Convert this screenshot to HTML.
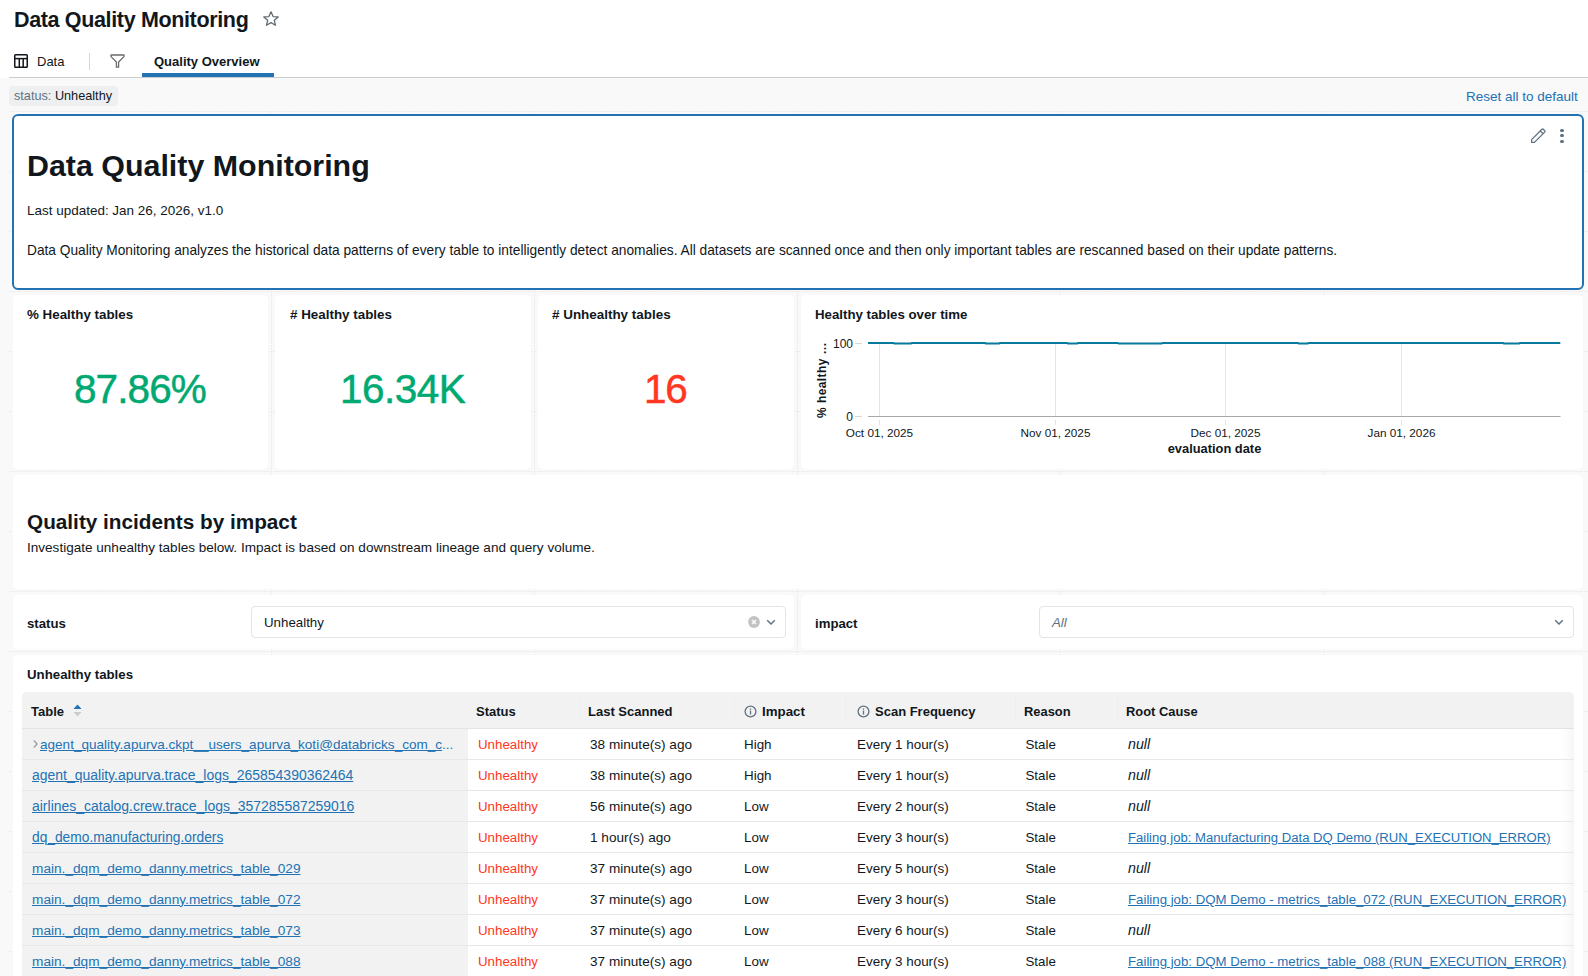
<!DOCTYPE html>
<html><head><meta charset="utf-8"><title>Data Quality Monitoring</title>
<style>
html,body{margin:0;padding:0;width:1588px;height:976px;overflow:hidden;background:#f9f9f9;}
body{position:relative;font-family:"Liberation Sans", sans-serif;}
.r{position:absolute;}
.t{position:absolute;white-space:nowrap;}
</style></head><body>
<div class="r" style="left:0px;top:0px;width:1588px;height:78px;background:#fff;"></div>
<div class="r" style="left:0px;top:78px;width:1588px;height:898px;background:#f9f9f9;"></div>
<div class="r" style="left:9px;top:77px;width:1579px;height:1px;background:#cdcdcd;"></div>
<svg class="r" style="left:0;top:0" width="1588" height="976"><line x1="9" y1="111.5" x2="1588" y2="111.5" stroke="#ececec" stroke-width="1" stroke-dasharray="2 1"/><line x1="9" y1="171.5" x2="1588" y2="171.5" stroke="#ececec" stroke-width="1" stroke-dasharray="2 1"/><line x1="9" y1="231.5" x2="1588" y2="231.5" stroke="#ececec" stroke-width="1" stroke-dasharray="2 1"/><line x1="9" y1="291.5" x2="1588" y2="291.5" stroke="#ececec" stroke-width="1" stroke-dasharray="2 1"/><line x1="9" y1="351.5" x2="1588" y2="351.5" stroke="#ececec" stroke-width="1" stroke-dasharray="2 1"/><line x1="9" y1="411.5" x2="1588" y2="411.5" stroke="#ececec" stroke-width="1" stroke-dasharray="2 1"/><line x1="9" y1="471.5" x2="1588" y2="471.5" stroke="#ececec" stroke-width="1" stroke-dasharray="2 1"/><line x1="9" y1="531.5" x2="1588" y2="531.5" stroke="#ececec" stroke-width="1" stroke-dasharray="2 1"/><line x1="9" y1="591.5" x2="1588" y2="591.5" stroke="#ececec" stroke-width="1" stroke-dasharray="2 1"/><line x1="9" y1="651.5" x2="1588" y2="651.5" stroke="#ececec" stroke-width="1" stroke-dasharray="2 1"/><line x1="9" y1="711.5" x2="1588" y2="711.5" stroke="#ececec" stroke-width="1" stroke-dasharray="2 1"/><line x1="9" y1="771.5" x2="1588" y2="771.5" stroke="#ececec" stroke-width="1" stroke-dasharray="2 1"/><line x1="9" y1="831.5" x2="1588" y2="831.5" stroke="#ececec" stroke-width="1" stroke-dasharray="2 1"/><line x1="9" y1="891.5" x2="1588" y2="891.5" stroke="#ececec" stroke-width="1" stroke-dasharray="2 1"/><line x1="9" y1="951.5" x2="1588" y2="951.5" stroke="#ececec" stroke-width="1" stroke-dasharray="2 1"/><line x1="271.5" y1="111" x2="271.5" y2="976" stroke="#ececec" stroke-width="1" stroke-dasharray="2 1"/><line x1="534.5" y1="111" x2="534.5" y2="976" stroke="#ececec" stroke-width="1" stroke-dasharray="2 1"/><line x1="797.5" y1="111" x2="797.5" y2="976" stroke="#ececec" stroke-width="1" stroke-dasharray="2 1"/><line x1="1060.5" y1="111" x2="1060.5" y2="976" stroke="#ececec" stroke-width="1" stroke-dasharray="2 1"/><line x1="1323.5" y1="111" x2="1323.5" y2="976" stroke="#ececec" stroke-width="1" stroke-dasharray="2 1"/></svg>
<div class="t " style="left:14.00px;top:10.25px;font-size:21.5px;line-height:21.5px;font-weight:700;color:#11171c;letter-spacing:-0.35px;font-style:normal;">Data Quality Monitoring</div>
<svg class="r" style="left:262px;top:10px" width="18" height="17" viewBox="0 0 18 17"><path d="M9 1.8 L11.1 6.6 L16.2 6.9 L12.3 10.3 L13.5 15.2 L9 12.6 L4.5 15.2 L5.7 10.3 L1.8 6.9 L6.9 6.6 Z" fill="none" stroke="#5f6b75" stroke-width="1.3" stroke-linejoin="round"/></svg>
<svg class="r" style="left:14px;top:54px" width="14" height="14" viewBox="0 0 14 14"><rect x="0.75" y="0.75" width="12.5" height="12.5" rx="0.8" fill="none" stroke="#11171c" stroke-width="1.5"/><line x1="0.75" y1="4.6" x2="13.25" y2="4.6" stroke="#11171c" stroke-width="1.5"/><line x1="5.3" y1="4.6" x2="5.3" y2="13" stroke="#11171c" stroke-width="1.5"/><line x1="9.2" y1="4.6" x2="9.2" y2="13" stroke="#11171c" stroke-width="1.5"/></svg>
<div class="t " style="left:37.00px;top:55.00px;font-size:13px;line-height:13px;font-weight:400;color:#11171c;letter-spacing:0px;font-style:normal;">Data</div>
<div class="r" style="left:89px;top:53px;width:1px;height:17px;background:#d6d6d6;"></div>
<svg class="r" style="left:110px;top:54px" width="15" height="14" viewBox="0 0 15 14"><path d="M1 1 H14 V2.6 L8.6 8 V13.2 H6.4 V8 L1 2.6 Z" fill="none" stroke="#6b6b6b" stroke-width="1.3" stroke-linejoin="round"/></svg>
<div class="t " style="left:154.00px;top:55.00px;font-size:13px;line-height:13px;font-weight:700;color:#11171c;letter-spacing:0px;font-style:normal;">Quality Overview</div>
<div class="r" style="left:142px;top:73px;width:132px;height:4px;background:#2272b4;"></div>
<div class="r" style="left:9px;top:86px;width:109px;height:20px;background:#eeeff1;border-radius:4px;"></div>
<div class="t " style="left:14.00px;top:89.65px;font-size:12.7px;line-height:12.7px;font-weight:400;color:#11171c;letter-spacing:0px;font-style:normal;"><span style="color:#5f7281">status:</span> Unhealthy</div>
<div class="t " style="left:1466.00px;top:89.75px;font-size:13.5px;line-height:13.5px;font-weight:400;color:#2272b4;letter-spacing:0px;font-style:normal;">Reset all to default</div>
<div class="r" style="left:12px;top:114px;width:1572px;height:176px;background:#fff;border:2px solid #2272b4;border-radius:6px;box-sizing:border-box;"></div>
<div class="t " style="left:27.00px;top:149.80px;font-size:30.4px;line-height:30.4px;font-weight:700;color:#11171c;letter-spacing:0px;font-style:normal;">Data Quality Monitoring</div>
<div class="t " style="left:27.00px;top:203.76px;font-size:13.48px;line-height:13.48px;font-weight:400;color:#11171c;letter-spacing:0px;font-style:normal;">Last updated: Jan 26, 2026, v1.0</div>
<div class="t " style="left:27.00px;top:243.64px;font-size:13.72px;line-height:13.72px;font-weight:400;color:#11171c;letter-spacing:0px;font-style:normal;">Data Quality Monitoring analyzes the historical data patterns of every table to intelligently detect anomalies. All datasets are scanned once and then only important tables are rescanned based on their update patterns.</div>
<svg class="r" style="left:1529px;top:127px" width="18" height="18" viewBox="0 0 18 18"><path d="M2.6 15.4 L2.6 12.6 L12.9 2.3 Q13.6 1.6 14.3 2.3 L15.7 3.7 Q16.4 4.4 15.7 5.1 L5.4 15.4 Z M11.3 3.9 L14.1 6.7" fill="none" stroke="#5f7281" stroke-width="1.3" stroke-linejoin="round"/></svg>
<div class="r" style="left:1560.4px;top:129.0px;width:3.2px;height:3.2px;border-radius:50%;background:#5f7281"></div>
<div class="r" style="left:1560.4px;top:134.3px;width:3.2px;height:3.2px;border-radius:50%;background:#5f7281"></div>
<div class="r" style="left:1560.4px;top:139.6px;width:3.2px;height:3.2px;border-radius:50%;background:#5f7281"></div>
<div class="r" style="left:12.5px;top:295.0px;width:255.83px;height:173.5px;background:#fff;border-radius:5px;"></div>
<div class="r" style="left:275.33px;top:295.0px;width:255.83px;height:173.5px;background:#fff;border-radius:5px;"></div>
<div class="r" style="left:538.17px;top:295.0px;width:255.83px;height:173.5px;background:#fff;border-radius:5px;"></div>
<div class="r" style="left:801.0px;top:295.0px;width:781.5px;height:173.5px;background:#fff;border-radius:5px;"></div>
<div class="t " style="left:27.00px;top:307.82px;font-size:13.36px;line-height:13.36px;font-weight:700;color:#11171c;letter-spacing:0px;font-style:normal;">% Healthy tables</div>
<div class="t " style="left:290.00px;top:307.80px;font-size:13.4px;line-height:13.4px;font-weight:700;color:#11171c;letter-spacing:0px;font-style:normal;"># Healthy tables</div>
<div class="t " style="left:552.00px;top:307.79px;font-size:13.43px;line-height:13.43px;font-weight:700;color:#11171c;letter-spacing:0px;font-style:normal;"># Unhealthy tables</div>
<div class="t " style="left:74.00px;top:368.75px;font-size:40.5px;line-height:40.5px;font-weight:400;color:#00a972;letter-spacing:-0.9px;font-style:normal;-webkit-text-stroke:0.5px #00a972;">87.86%</div>
<div class="t " style="left:340.00px;top:368.75px;font-size:40.5px;line-height:40.5px;font-weight:400;color:#00a972;letter-spacing:-0.5px;font-style:normal;-webkit-text-stroke:0.5px #00a972;">16.34K</div>
<div class="t " style="left:644.00px;top:368.75px;font-size:40.5px;line-height:40.5px;font-weight:400;color:#ff3621;letter-spacing:-1.3px;font-style:normal;-webkit-text-stroke:0.5px #ff3621;">16</div>
<div class="t " style="left:815.00px;top:307.87px;font-size:13.26px;line-height:13.26px;font-weight:700;color:#11171c;letter-spacing:0px;font-style:normal;">Healthy tables over time</div>
<svg class="r" style="left:0;top:0" width="1588" height="976" font-family="Liberation Sans, sans-serif"><line x1="879.5" y1="343" x2="879.5" y2="416" stroke="#e4e4e4" stroke-width="1"/><line x1="879.5" y1="420" x2="879.5" y2="425" stroke="#e4e4e4" stroke-width="1"/><line x1="1055.5" y1="343" x2="1055.5" y2="416" stroke="#e4e4e4" stroke-width="1"/><line x1="1055.5" y1="420" x2="1055.5" y2="425" stroke="#e4e4e4" stroke-width="1"/><line x1="1225.5" y1="343" x2="1225.5" y2="416" stroke="#e4e4e4" stroke-width="1"/><line x1="1225.5" y1="420" x2="1225.5" y2="425" stroke="#e4e4e4" stroke-width="1"/><line x1="1401.5" y1="343" x2="1401.5" y2="416" stroke="#e4e4e4" stroke-width="1"/><line x1="1401.5" y1="420" x2="1401.5" y2="425" stroke="#e4e4e4" stroke-width="1"/><line x1="868" y1="416.5" x2="1560.5" y2="416.5" stroke="#a8a8a8" stroke-width="1"/><line x1="855" y1="343.5" x2="862" y2="343.5" stroke="#d8d8d8" stroke-width="1"/><line x1="855" y1="416.5" x2="862" y2="416.5" stroke="#d8d8d8" stroke-width="1"/><text x="853" y="348" font-size="12" text-anchor="end" fill="#11171c">100</text><text x="853" y="420.5" font-size="12" text-anchor="end" fill="#11171c">0</text><text x="879.5" y="437" font-size="11.75" text-anchor="middle" fill="#11171c">Oct 01, 2025</text><text x="1055.5" y="437" font-size="11.75" text-anchor="middle" fill="#11171c">Nov 01, 2025</text><text x="1225.5" y="437" font-size="11.75" text-anchor="middle" fill="#11171c">Dec 01, 2025</text><text x="1401.5" y="437" font-size="11.75" text-anchor="middle" fill="#11171c">Jan 01, 2026</text><text x="1214.5" y="452.6" font-size="12.87" font-weight="700" text-anchor="middle" fill="#11171c">evaluation date</text><text transform="translate(825.5,380) rotate(-90)" font-size="12" font-weight="700" letter-spacing="0.4" text-anchor="middle" fill="#11171c">% healthy …</text><polyline points="868.0,343.0 893.5,343.0 894.5,343.5 910.9,343.5 911.9,343.0 985.0,343.0 986.0,343.5 999.0,343.5 1000.0,343.0 1067.0,343.0 1068.0,343.5 1077.0,343.5 1078.0,343.0 1117.7,343.0 1118.7,343.5 1161.5,343.5 1162.5,343.0 1297.8,343.0 1298.8,343.5 1307.6,343.5 1308.6,343.0 1503.0,343.0 1504.0,343.5 1519.0,343.5 1520.0,343.0 1560.3,343.0" fill="none" stroke="#077a9d" stroke-width="2"/></svg>
<div class="r" style="left:12.5px;top:475.0px;width:1570.0px;height:113.5px;background:#fff;border-radius:5px;"></div>
<div class="t " style="left:27.00px;top:512.12px;font-size:20.76px;line-height:20.76px;font-weight:700;color:#11171c;letter-spacing:0px;font-style:normal;">Quality incidents by impact</div>
<div class="t " style="left:27.00px;top:540.72px;font-size:13.56px;line-height:13.56px;font-weight:400;color:#11171c;letter-spacing:0px;font-style:normal;">Investigate unhealthy tables below. Impact is based on downstream lineage and query volume.</div>
<div class="r" style="left:12.5px;top:595.0px;width:781.5px;height:53.5px;background:#fff;border-radius:5px;"></div>
<div class="r" style="left:801.0px;top:595.0px;width:781.5px;height:53.5px;background:#fff;border-radius:5px;"></div>
<div class="t " style="left:27.00px;top:616.90px;font-size:13.2px;line-height:13.2px;font-weight:700;color:#11171c;letter-spacing:0px;font-style:normal;">status</div>
<div class="r" style="left:251px;top:606px;width:535px;height:32px;background:#fff;border:1px solid #e2e4e6;border-radius:4px;box-sizing:border-box;"></div>
<div class="t " style="left:264.00px;top:616.35px;font-size:13.3px;line-height:13.3px;font-weight:400;color:#11171c;letter-spacing:0px;font-style:normal;">Unhealthy</div>
<svg class="r" style="left:748px;top:616px" width="12" height="12" viewBox="0 0 12 12"><circle cx="6" cy="6" r="5.9" fill="#c3c3c3"/><path d="M4 4 L8 8 M8 4 L4 8" stroke="#fff" stroke-width="1.4"/></svg>
<svg class="r" style="left:766px;top:618px" width="10" height="8" viewBox="0 0 10 8"><path d="M1.2 2.2 L5 6 L8.8 2.2" fill="none" stroke="#5f7281" stroke-width="1.5"/></svg>
<div class="t " style="left:815.00px;top:616.90px;font-size:13.2px;line-height:13.2px;font-weight:700;color:#11171c;letter-spacing:0px;font-style:normal;">impact</div>
<div class="r" style="left:1039px;top:606px;width:535px;height:32px;background:#fff;border:1px solid #e2e4e6;border-radius:4px;box-sizing:border-box;"></div>
<div class="t " style="left:1052.00px;top:616.35px;font-size:13.3px;line-height:13.3px;font-weight:400;color:#5f7281;letter-spacing:0px;font-style:italic;">All</div>
<svg class="r" style="left:1554px;top:618px" width="10" height="8" viewBox="0 0 10 8"><path d="M1.2 2.2 L5 6 L8.8 2.2" fill="none" stroke="#5f7281" stroke-width="1.5"/></svg>
<div class="r" style="left:12.5px;top:655.0px;width:1570.0px;height:353.5px;background:#fff;border-radius:5px;"></div>
<div class="t " style="left:27.00px;top:667.88px;font-size:13.25px;line-height:13.25px;font-weight:700;color:#11171c;letter-spacing:0px;font-style:normal;">Unhealthy tables</div>
<div class="r" style="left:22px;top:692px;width:1552px;height:36px;background:#f2f2f2;border-radius:5px 5px 0 0;"></div>
<div class="r" style="left:22px;top:728px;width:1552px;height:1px;background:#e4e4e4;"></div>
<div class="r" style="left:22px;top:729px;width:446px;height:247px;background:#f2f2f2;"></div>
<div class="r" style="left:468px;top:729px;width:1106px;height:247px;background:#fff;"></div>
<div class="r" style="left:1562px;top:729px;width:12px;height:247px;background:linear-gradient(to right, rgba(0,0,0,0), rgba(0,0,0,0.035));"></div>
<div class="r" style="left:22px;top:759px;width:1552px;height:1px;background:#e8e8e8;"></div>
<div class="r" style="left:22px;top:790px;width:1552px;height:1px;background:#e8e8e8;"></div>
<div class="r" style="left:22px;top:821px;width:1552px;height:1px;background:#e8e8e8;"></div>
<div class="r" style="left:22px;top:852px;width:1552px;height:1px;background:#e8e8e8;"></div>
<div class="r" style="left:22px;top:883px;width:1552px;height:1px;background:#e8e8e8;"></div>
<div class="r" style="left:22px;top:914px;width:1552px;height:1px;background:#e8e8e8;"></div>
<div class="r" style="left:22px;top:945px;width:1552px;height:1px;background:#e8e8e8;"></div>
<div class="r" style="left:22px;top:976px;width:1552px;height:1px;background:#e8e8e8;"></div>
<div class="r" style="left:579px;top:697px;width:1px;height:26px;background:#eeeeee;"></div>
<div class="r" style="left:734px;top:697px;width:1px;height:26px;background:#eeeeee;"></div>
<div class="r" style="left:845px;top:697px;width:1px;height:26px;background:#eeeeee;"></div>
<div class="r" style="left:1015px;top:697px;width:1px;height:26px;background:#eeeeee;"></div>
<div class="r" style="left:1117px;top:697px;width:1px;height:26px;background:#eeeeee;"></div>
<div class="t " style="left:31.00px;top:705.00px;font-size:13.0px;line-height:13.0px;font-weight:700;color:#11171c;letter-spacing:0px;font-style:normal;">Table</div>
<svg class="r" style="left:73px;top:703px" width="9" height="15" viewBox="0 0 9 15"><path d="M0.5 6 L4.5 1.4 L8.5 6 Z" fill="#2272b4"/><path d="M0.5 9 L4.5 13.6 L8.5 9 Z" fill="#c8ccd0"/></svg>
<div class="t " style="left:476.00px;top:705.00px;font-size:13.0px;line-height:13.0px;font-weight:700;color:#11171c;letter-spacing:0px;font-style:normal;">Status</div>
<div class="t " style="left:588.00px;top:705.00px;font-size:13.0px;line-height:13.0px;font-weight:700;color:#11171c;letter-spacing:0px;font-style:normal;">Last Scanned</div>
<svg class="r" style="left:743.5px;top:705px" width="13" height="13" viewBox="0 0 13 13"><circle cx="6.5" cy="6.5" r="5.4" fill="none" stroke="#5f7281" stroke-width="1.3"/><rect x="5.85" y="5.6" width="1.3" height="4" fill="#5f7281"/><rect x="5.85" y="3.4" width="1.3" height="1.3" fill="#5f7281"/></svg>
<svg class="r" style="left:856.5px;top:705px" width="13" height="13" viewBox="0 0 13 13"><circle cx="6.5" cy="6.5" r="5.4" fill="none" stroke="#5f7281" stroke-width="1.3"/><rect x="5.85" y="5.6" width="1.3" height="4" fill="#5f7281"/><rect x="5.85" y="3.4" width="1.3" height="1.3" fill="#5f7281"/></svg>
<div class="t " style="left:762.00px;top:704.85px;font-size:13.3px;line-height:13.3px;font-weight:700;color:#11171c;letter-spacing:0px;font-style:normal;">Impact</div>
<div class="t " style="left:875.00px;top:705.00px;font-size:13.0px;line-height:13.0px;font-weight:700;color:#11171c;letter-spacing:0px;font-style:normal;">Scan Frequency</div>
<div class="t " style="left:1024.00px;top:706.05px;font-size:12.9px;line-height:12.9px;font-weight:700;color:#11171c;letter-spacing:0px;font-style:normal;">Reason</div>
<div class="t " style="left:1126.00px;top:706.05px;font-size:12.9px;line-height:12.9px;font-weight:700;color:#11171c;letter-spacing:0px;font-style:normal;">Root Cause</div>
<svg class="r" style="left:32px;top:739px" width="7" height="10" viewBox="0 0 7 10"><path d="M1.8 1.5 L5.2 5 L1.8 8.5" fill="none" stroke="#9a9a9a" stroke-width="1.2"/></svg>
<div class="t " style="left:40.00px;top:737.72px;font-size:13.56px;line-height:13.56px;font-weight:400;color:#2272b4;letter-spacing:0px;font-style:normal;"><span style="text-decoration:underline">agent_quality.apurva.ckpt__users_apurva_koti@databricks_com_c</span>...</div>
<div class="t " style="left:478.00px;top:737.84px;font-size:13.32px;line-height:13.32px;font-weight:400;color:#ff3621;letter-spacing:0px;font-style:normal;">Unhealthy</div>
<div class="t " style="left:590.00px;top:737.70px;font-size:13.6px;line-height:13.6px;font-weight:400;color:#11171c;letter-spacing:0px;font-style:normal;">38 minute(s) ago</div>
<div class="t " style="left:744.00px;top:737.80px;font-size:13.4px;line-height:13.4px;font-weight:400;color:#11171c;letter-spacing:0px;font-style:normal;">High</div>
<div class="t " style="left:857.00px;top:737.78px;font-size:13.43px;line-height:13.43px;font-weight:400;color:#11171c;letter-spacing:0px;font-style:normal;">Every 1 hour(s)</div>
<div class="t " style="left:1025.50px;top:737.85px;font-size:13.3px;line-height:13.3px;font-weight:400;color:#11171c;letter-spacing:0px;font-style:normal;">Stale</div>
<div class="t " style="left:1128.00px;top:736.90px;font-size:14.2px;line-height:14.2px;font-weight:400;color:#11171c;letter-spacing:0px;font-style:italic;">null</div>
<div class="t " style="left:32.00px;top:768.01px;font-size:13.98px;line-height:13.98px;font-weight:400;color:#2272b4;letter-spacing:0px;font-style:normal;text-decoration:underline;">agent_quality.apurva.trace_logs_265854390362464</div>
<div class="t " style="left:478.00px;top:768.84px;font-size:13.32px;line-height:13.32px;font-weight:400;color:#ff3621;letter-spacing:0px;font-style:normal;">Unhealthy</div>
<div class="t " style="left:590.00px;top:768.70px;font-size:13.6px;line-height:13.6px;font-weight:400;color:#11171c;letter-spacing:0px;font-style:normal;">38 minute(s) ago</div>
<div class="t " style="left:744.00px;top:768.80px;font-size:13.4px;line-height:13.4px;font-weight:400;color:#11171c;letter-spacing:0px;font-style:normal;">High</div>
<div class="t " style="left:857.00px;top:768.78px;font-size:13.43px;line-height:13.43px;font-weight:400;color:#11171c;letter-spacing:0px;font-style:normal;">Every 1 hour(s)</div>
<div class="t " style="left:1025.50px;top:768.85px;font-size:13.3px;line-height:13.3px;font-weight:400;color:#11171c;letter-spacing:0px;font-style:normal;">Stale</div>
<div class="t " style="left:1128.00px;top:767.90px;font-size:14.2px;line-height:14.2px;font-weight:400;color:#11171c;letter-spacing:0px;font-style:italic;">null</div>
<div class="t " style="left:32.00px;top:799.01px;font-size:13.98px;line-height:13.98px;font-weight:400;color:#2272b4;letter-spacing:0px;font-style:normal;text-decoration:underline;">airlines_catalog.crew.trace_logs_357285587259016</div>
<div class="t " style="left:478.00px;top:799.84px;font-size:13.32px;line-height:13.32px;font-weight:400;color:#ff3621;letter-spacing:0px;font-style:normal;">Unhealthy</div>
<div class="t " style="left:590.00px;top:799.70px;font-size:13.6px;line-height:13.6px;font-weight:400;color:#11171c;letter-spacing:0px;font-style:normal;">56 minute(s) ago</div>
<div class="t " style="left:744.00px;top:799.80px;font-size:13.4px;line-height:13.4px;font-weight:400;color:#11171c;letter-spacing:0px;font-style:normal;">Low</div>
<div class="t " style="left:857.00px;top:799.78px;font-size:13.43px;line-height:13.43px;font-weight:400;color:#11171c;letter-spacing:0px;font-style:normal;">Every 2 hour(s)</div>
<div class="t " style="left:1025.50px;top:799.85px;font-size:13.3px;line-height:13.3px;font-weight:400;color:#11171c;letter-spacing:0px;font-style:normal;">Stale</div>
<div class="t " style="left:1128.00px;top:798.90px;font-size:14.2px;line-height:14.2px;font-weight:400;color:#11171c;letter-spacing:0px;font-style:italic;">null</div>
<div class="t " style="left:32.00px;top:830.62px;font-size:13.77px;line-height:13.77px;font-weight:400;color:#2272b4;letter-spacing:0px;font-style:normal;text-decoration:underline;">dq_demo.manufacturing.orders</div>
<div class="t " style="left:478.00px;top:830.84px;font-size:13.32px;line-height:13.32px;font-weight:400;color:#ff3621;letter-spacing:0px;font-style:normal;">Unhealthy</div>
<div class="t " style="left:590.00px;top:830.70px;font-size:13.6px;line-height:13.6px;font-weight:400;color:#11171c;letter-spacing:0px;font-style:normal;">1 hour(s) ago</div>
<div class="t " style="left:744.00px;top:830.80px;font-size:13.4px;line-height:13.4px;font-weight:400;color:#11171c;letter-spacing:0px;font-style:normal;">Low</div>
<div class="t " style="left:857.00px;top:830.78px;font-size:13.43px;line-height:13.43px;font-weight:400;color:#11171c;letter-spacing:0px;font-style:normal;">Every 3 hour(s)</div>
<div class="t " style="left:1025.50px;top:830.85px;font-size:13.3px;line-height:13.3px;font-weight:400;color:#11171c;letter-spacing:0px;font-style:normal;">Stale</div>
<div class="t " style="left:1128.00px;top:830.95px;font-size:13.11px;line-height:13.11px;font-weight:400;color:#2272b4;letter-spacing:0px;font-style:normal;text-decoration:underline;">Failing job: Manufacturing Data DQ Demo (RUN_EXECUTION_ERROR)</div>
<div class="t " style="left:32.00px;top:861.67px;font-size:13.66px;line-height:13.66px;font-weight:400;color:#2272b4;letter-spacing:0px;font-style:normal;text-decoration:underline;">main._dqm_demo_danny.metrics_table_029</div>
<div class="t " style="left:478.00px;top:861.84px;font-size:13.32px;line-height:13.32px;font-weight:400;color:#ff3621;letter-spacing:0px;font-style:normal;">Unhealthy</div>
<div class="t " style="left:590.00px;top:861.70px;font-size:13.6px;line-height:13.6px;font-weight:400;color:#11171c;letter-spacing:0px;font-style:normal;">37 minute(s) ago</div>
<div class="t " style="left:744.00px;top:861.80px;font-size:13.4px;line-height:13.4px;font-weight:400;color:#11171c;letter-spacing:0px;font-style:normal;">Low</div>
<div class="t " style="left:857.00px;top:861.78px;font-size:13.43px;line-height:13.43px;font-weight:400;color:#11171c;letter-spacing:0px;font-style:normal;">Every 5 hour(s)</div>
<div class="t " style="left:1025.50px;top:861.85px;font-size:13.3px;line-height:13.3px;font-weight:400;color:#11171c;letter-spacing:0px;font-style:normal;">Stale</div>
<div class="t " style="left:1128.00px;top:860.90px;font-size:14.2px;line-height:14.2px;font-weight:400;color:#11171c;letter-spacing:0px;font-style:italic;">null</div>
<div class="t " style="left:32.00px;top:892.67px;font-size:13.66px;line-height:13.66px;font-weight:400;color:#2272b4;letter-spacing:0px;font-style:normal;text-decoration:underline;">main._dqm_demo_danny.metrics_table_072</div>
<div class="t " style="left:478.00px;top:892.84px;font-size:13.32px;line-height:13.32px;font-weight:400;color:#ff3621;letter-spacing:0px;font-style:normal;">Unhealthy</div>
<div class="t " style="left:590.00px;top:892.70px;font-size:13.6px;line-height:13.6px;font-weight:400;color:#11171c;letter-spacing:0px;font-style:normal;">37 minute(s) ago</div>
<div class="t " style="left:744.00px;top:892.80px;font-size:13.4px;line-height:13.4px;font-weight:400;color:#11171c;letter-spacing:0px;font-style:normal;">Low</div>
<div class="t " style="left:857.00px;top:892.78px;font-size:13.43px;line-height:13.43px;font-weight:400;color:#11171c;letter-spacing:0px;font-style:normal;">Every 3 hour(s)</div>
<div class="t " style="left:1025.50px;top:892.85px;font-size:13.3px;line-height:13.3px;font-weight:400;color:#11171c;letter-spacing:0px;font-style:normal;">Stale</div>
<div class="t " style="left:1128.00px;top:892.88px;font-size:13.24px;line-height:13.24px;font-weight:400;color:#2272b4;letter-spacing:0px;font-style:normal;text-decoration:underline;">Failing job: DQM Demo - metrics_table_072 (RUN_EXECUTION_ERROR)</div>
<div class="t " style="left:32.00px;top:923.67px;font-size:13.66px;line-height:13.66px;font-weight:400;color:#2272b4;letter-spacing:0px;font-style:normal;text-decoration:underline;">main._dqm_demo_danny.metrics_table_073</div>
<div class="t " style="left:478.00px;top:923.84px;font-size:13.32px;line-height:13.32px;font-weight:400;color:#ff3621;letter-spacing:0px;font-style:normal;">Unhealthy</div>
<div class="t " style="left:590.00px;top:923.70px;font-size:13.6px;line-height:13.6px;font-weight:400;color:#11171c;letter-spacing:0px;font-style:normal;">37 minute(s) ago</div>
<div class="t " style="left:744.00px;top:923.80px;font-size:13.4px;line-height:13.4px;font-weight:400;color:#11171c;letter-spacing:0px;font-style:normal;">Low</div>
<div class="t " style="left:857.00px;top:923.78px;font-size:13.43px;line-height:13.43px;font-weight:400;color:#11171c;letter-spacing:0px;font-style:normal;">Every 6 hour(s)</div>
<div class="t " style="left:1025.50px;top:923.85px;font-size:13.3px;line-height:13.3px;font-weight:400;color:#11171c;letter-spacing:0px;font-style:normal;">Stale</div>
<div class="t " style="left:1128.00px;top:922.90px;font-size:14.2px;line-height:14.2px;font-weight:400;color:#11171c;letter-spacing:0px;font-style:italic;">null</div>
<div class="t " style="left:32.00px;top:954.67px;font-size:13.66px;line-height:13.66px;font-weight:400;color:#2272b4;letter-spacing:0px;font-style:normal;text-decoration:underline;">main._dqm_demo_danny.metrics_table_088</div>
<div class="t " style="left:478.00px;top:954.84px;font-size:13.32px;line-height:13.32px;font-weight:400;color:#ff3621;letter-spacing:0px;font-style:normal;">Unhealthy</div>
<div class="t " style="left:590.00px;top:954.70px;font-size:13.6px;line-height:13.6px;font-weight:400;color:#11171c;letter-spacing:0px;font-style:normal;">37 minute(s) ago</div>
<div class="t " style="left:744.00px;top:954.80px;font-size:13.4px;line-height:13.4px;font-weight:400;color:#11171c;letter-spacing:0px;font-style:normal;">Low</div>
<div class="t " style="left:857.00px;top:954.78px;font-size:13.43px;line-height:13.43px;font-weight:400;color:#11171c;letter-spacing:0px;font-style:normal;">Every 3 hour(s)</div>
<div class="t " style="left:1025.50px;top:954.85px;font-size:13.3px;line-height:13.3px;font-weight:400;color:#11171c;letter-spacing:0px;font-style:normal;">Stale</div>
<div class="t " style="left:1128.00px;top:954.88px;font-size:13.24px;line-height:13.24px;font-weight:400;color:#2272b4;letter-spacing:0px;font-style:normal;text-decoration:underline;">Failing job: DQM Demo - metrics_table_088 (RUN_EXECUTION_ERROR)</div>
</body></html>
